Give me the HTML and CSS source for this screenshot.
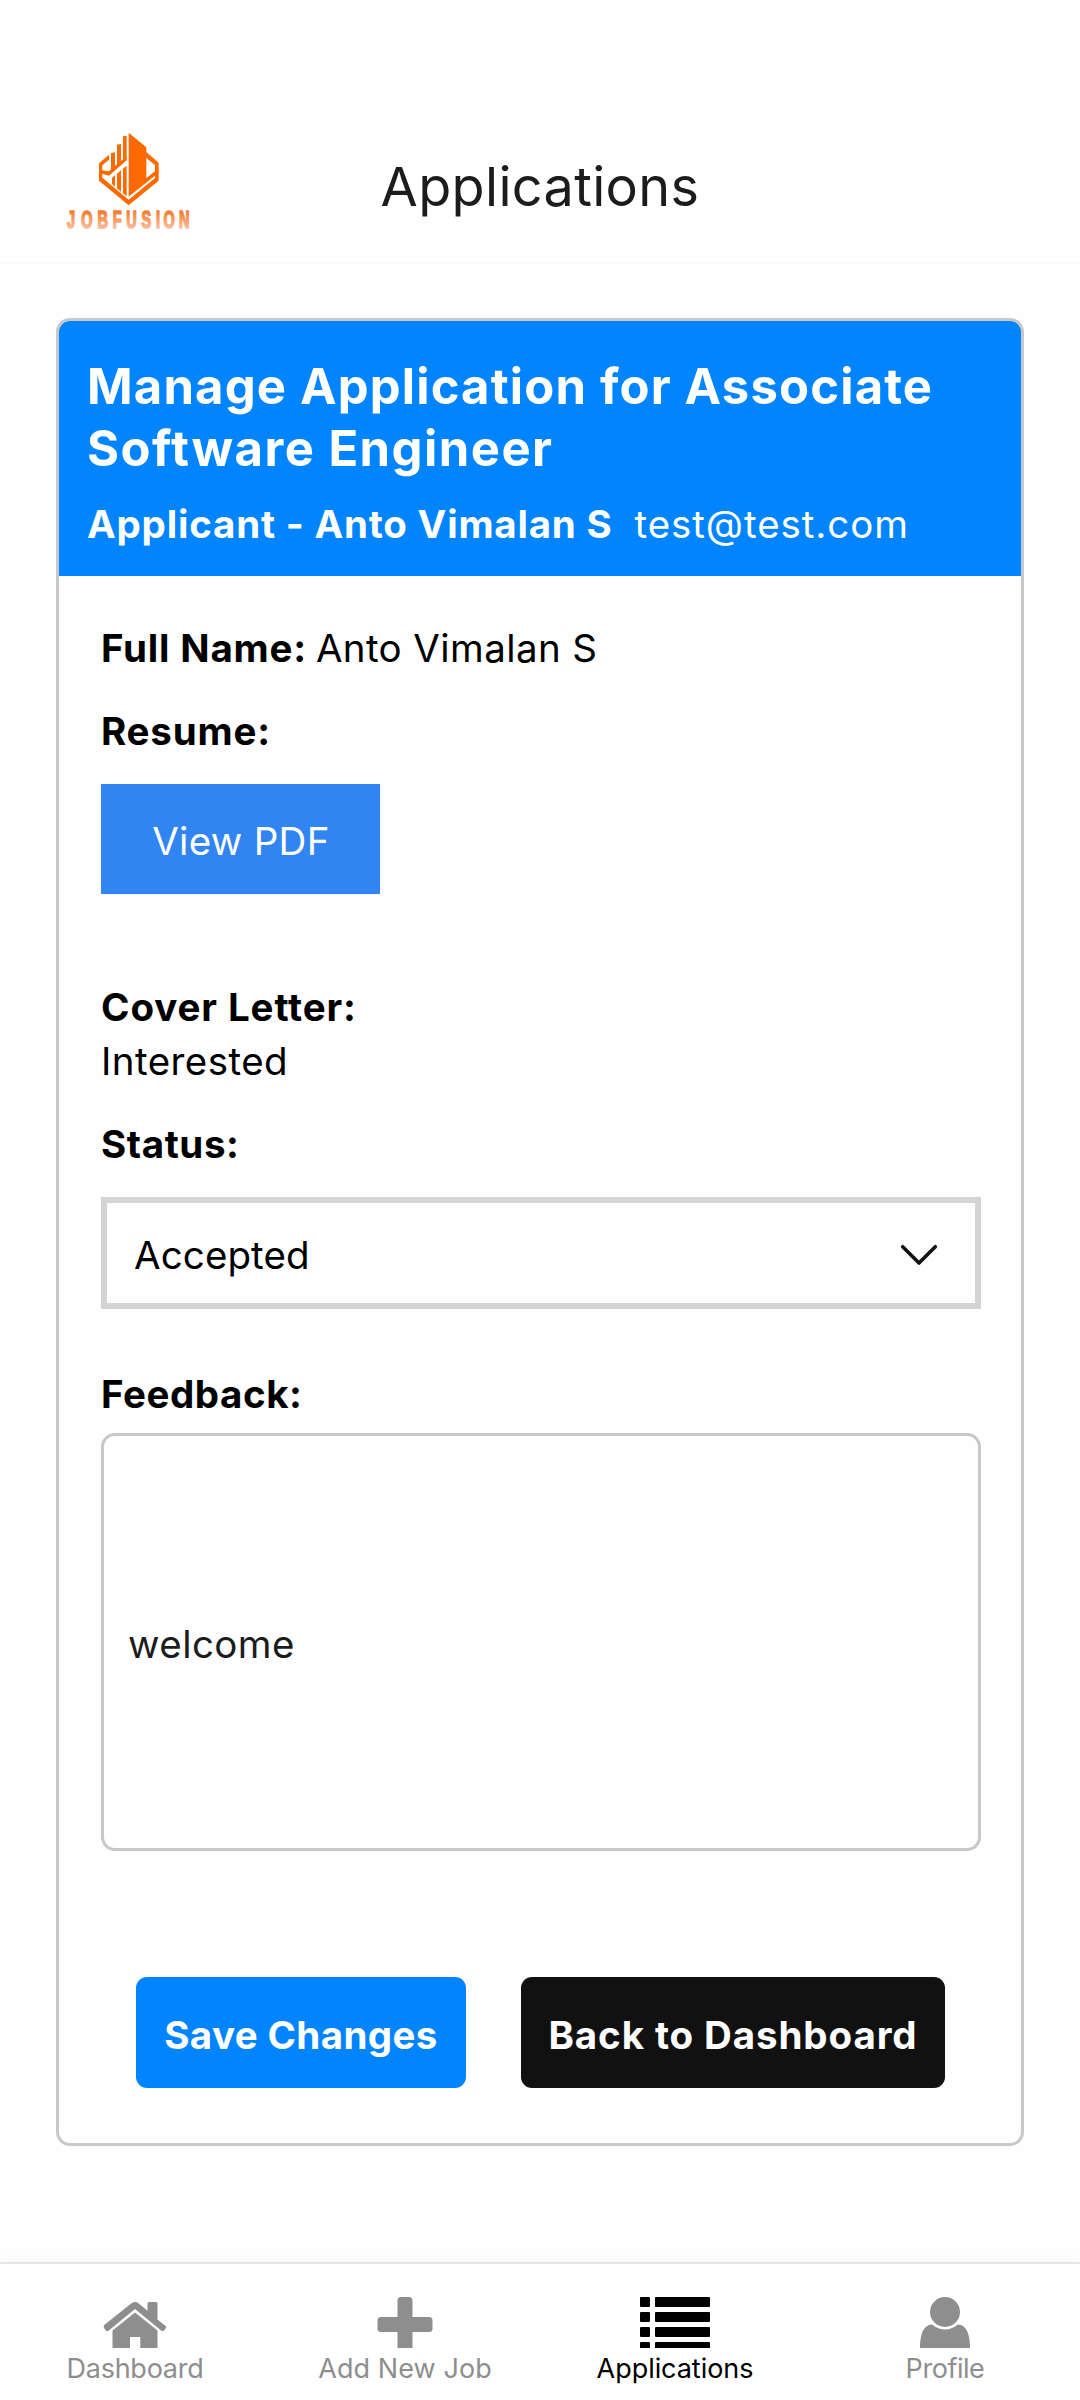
FILE: index.html
```html
<!DOCTYPE html>
<html lang="en">
<head>
<meta charset="utf-8">
<title>Applications</title>
<link rel="stylesheet" href="styles.css">
</head>
<body>
<header class="topbar">
  <svg class="logo" viewBox="0 0 540 420" role="img" aria-label="Jobfusion">
    <defs>
      <linearGradient id="word" x1="0" y1="0" x2="0" y2="1">
        <stop offset="0.2" stop-color="#f47c30"/>
        <stop offset="0.8" stop-color="#fbb893"/>
      </linearGradient>
    </defs>
    <g fill="#ff6a00">
      <path fill-rule="evenodd" d="M266 68L319 112V126L356 158V188L266 260ZM319 144V204L345 184V166Z"/>
      <path d="M356 180V212L266 286L177 212V180H187V203L266 269L345 204V180Z"/>
      <path d="M207 134L177 160V190L187 186V166L207 149Z"/>
      <path d="M213 129L225 127V178L213 188ZM231 104L243 102V163L231 173ZM249 79L260 77V148L249 158Z"/>
      <path d="M180 180L206 184L260 139V151L207 197L180 190Z"/>
      <path d="M216 203L225 196V230L216 222ZM231 191L243 181V245L231 235ZM249 176L260 167V259L249 250Z"/>
    </g>
    <g class="wordmark" transform="translate(0 353) scale(.62 1)" fill="url(#word)" stroke="url(#word)" stroke-width="5">
      <text x="131 199 278 352 417 491 561 597 672">JOBFUSION</text>
    </g>
  </svg>
  <h1 class="title">Applications</h1>
</header>

<main class="card">
  <section class="card-head">
    <h2 class="heading"><span class="heading-first">Manage Application for Associate</span> <span class="heading-second">Software Engineer</span></h2>
    <p class="applicant"><strong class="applicant-name">Applicant - Anto Vimalan S</strong><span class="email">test@test.com</span></p>
  </section>
  <section class="card-body">
    <p class="row"><strong class="name-label">Full Name:</strong><span class="name">Anto Vimalan S</span></p>
    <p class="row gap-md"><strong class="resume-label">Resume:</strong></p>
    <button class="pdf">View PDF</button>
    <p class="row gap-xl"><strong class="cover-label">Cover Letter:</strong></p>
    <p class="row"><span class="cover">Interested</span></p>
    <p class="row gap-md"><strong class="status-label">Status:</strong></p>
    <div class="select">
      <span class="select-value">Accepted</span>
      <svg class="chevron" viewBox="0 0 38 22"><path d="M2.700 2.700L19 19L35.300 2.700"/></svg>
    </div>
    <p class="row gap-lg"><strong class="feedback-label">Feedback:</strong></p>
    <div class="feedback">welcome</div>
    <div class="actions">
      <button class="btn save">Save Changes</button>
      <button class="btn back">Back to Dashboard</button>
    </div>
  </section>
</main>

<nav class="tabs">
  <a class="tab tab-home">
    <svg class="icon" width="64" height="51" viewBox="0 0 64 51"><path d="M1.200 28L28.500 6.300Q32 3.700 35.500 6.300L44.500 13.700V6.500Q44.500 5 46 5H53Q54.500 5 54.500 6.500V22.500L62.600 29Q63.700 30 62.900 31L60.800 33.700Q59.800 34.800 58.500 33.800L32 12L5.500 33.800Q4.200 34.800 3.200 33.700L1 31Q.2 29.500 1.200 28Z"/><path d="M9.500 33.500L32 15.500L54.500 33.500V51H37.300V40H27V51H9.500Z"/></svg>
    <span class="tab-text">Dashboard</span>
  </a>
  <a class="tab tab-add">
    <svg class="icon" width="56" height="51" viewBox="0 0 56 51"><path d="M24 0H32Q35.500 0 35.500 3.500V20H52Q55.500 20 55.500 23.500V31.500Q55.500 35 52 35H35.500V51H20.500V35H4Q.5 35 .5 31.500V23.500Q.5 20 4 20H20.500V3.500Q20.500 0 24 0Z"/></svg>
    <span class="tab-text">Add New Job</span>
  </a>
  <a class="tab tab-apps active">
    <svg class="icon" width="70" height="51" viewBox="0 0 70 51"><g><rect width="10" height="10" rx="1"/><rect x="15" width="55" height="10" rx="1"/><rect y="15" width="10" height="10" rx="1"/><rect x="15" y="15" width="55" height="10" rx="1"/><rect y="30" width="10" height="10" rx="1"/><rect x="15" y="30" width="55" height="10" rx="1"/><rect y="45" width="10" height="10" rx="1"/><rect x="15" y="45" width="55" height="10" rx="1"/></g></svg>
    <span class="tab-text">Applications</span>
  </a>
  <a class="tab tab-profile">
    <svg class="icon" width="50" height="51" viewBox="0 0 50 51"><circle cx="25" cy="15" r="15"/><path d="M12 27.500Q25 37.500 38 27.500C47 28 50 38 50 51H0C0 38 3 28 12 27.500Z"/></svg>
    <span class="tab-text">Profile</span>
  </a>
</nav>
</body>
</html>
```
FILE: styles.css
```css
* { box-sizing: border-box; }

body {
  margin: 0;
  height: 2400px;
  display: flex;
  flex-direction: column;
  background: #fefefe;
  color: #000;
  font: 400 38.5px/54px Inter, sans-serif;
}

h1, h2, p { margin: 0; }
strong { font-weight: 700; }

button {
  border: 0;
  font: inherit;
  color: #fff;
}

/* Top bar */
.topbar {
  height: 264px;
  padding: 110px 40px 0;
  display: grid;
  grid-template-columns: 1fr auto 1fr;
  background: #fff;
  border-bottom: 2px solid #fafafa;
}

.logo { width: 180px; height: 140px; }
.wordmark { font: 700 70px "Liberation Sans", sans-serif; }

.title {
  font-size: 54px;
  font-weight: 400;
  line-height: 154px;
  letter-spacing: .34px;
  color: #1c1c1e;
}

/* Card */
.card {
  margin: 54px 56px 0;
  border: 3px solid #c8c8c8;
  border-radius: 14px;
  overflow: hidden;
}

.card-head {
  height: 255px;
  padding: 35px 28px 0;
  background: #0084ff;
  color: #fff;
}

.heading { font-size: 49px; line-height: 62px; }
.heading span { display: block; }
.heading-first { letter-spacing: 1.16px; }
.heading-second { letter-spacing: 1.47px; }

.applicant { margin-top: 17px; display: flex; gap: 22px; }
.applicant-name { letter-spacing: .8px; }
.email { letter-spacing: .93px; }

.card-body { padding: 45px 40px 55px 42px; }
.row { display: flex; gap: 9px; }
.gap-md { margin-top: 29px; }
.gap-lg { margin-top: 58px; }
.gap-xl { margin-top: 86px; }

.name-label { letter-spacing: .8px; }
.name { letter-spacing: .4px; }
.resume-label { letter-spacing: .8px; }
.cover-label { letter-spacing: .9px; }
.cover { letter-spacing: .45px; }
.status-label { letter-spacing: .6px; }
.feedback-label { letter-spacing: .55px; }

.pdf {
  display: block;
  width: 279px;
  height: 110px;
  margin-top: 26px;
  padding: 4px 0 0 1px;
  background: #3185f3;
  letter-spacing: .3px;
}

.select {
  height: 112px;
  margin-top: 26px;
  padding: 3px 37px 0 27px;
  display: flex;
  align-items: center;
  justify-content: space-between;
  border: 6px solid #d4d4d4;
}

.select-value { letter-spacing: .11px; }
.chevron { width: 38px; height: 22px; }
.chevron path {
  fill: none;
  stroke: #111;
  stroke-width: 3.6;
  stroke-linecap: round;
  stroke-linejoin: round;
}

.feedback {
  height: 418px;
  margin-top: 12px;
  padding: 3px 24px 0;
  display: flex;
  align-items: center;
  border: 3px solid #c8c8c8;
  border-radius: 14px;
  color: #1c1c1e;
  letter-spacing: .44px;
}

.actions {
  margin-top: 126px;
  padding-right: 1px;
  display: flex;
  justify-content: center;
  gap: 55px;
}

.btn {
  height: 111px;
  padding: 5px 0 0;
  border-radius: 11px;
  font-weight: 700;
}

.save { width: 330px; background: #0084ff; letter-spacing: .38px; }
.back { width: 424px; background: #111; letter-spacing: .9px; }

/* Bottom tabs */
.tabs {
  height: 138px;
  margin-top: auto;
  padding-top: 33px;
  display: grid;
  grid-template-columns: repeat(4, 1fr);
  background: #fff;
  border-top: 2px solid #e6e6e6;
  box-shadow: 0 -2px 12px rgba(0, 0, 0, .03);
}

.tab {
  display: flex;
  flex-direction: column;
  align-items: center;
  gap: 3px;
  color: #8e8e8f;
  font-size: 27px;
  line-height: 36px;
}

.active { color: #000; }
.icon { fill: currentColor; }
.tab-home { letter-spacing: -.25px; }
.tab-add { letter-spacing: .08px; }
.tab-apps { letter-spacing: -.05px; }
.tab-profile { letter-spacing: -.45px; }
```
